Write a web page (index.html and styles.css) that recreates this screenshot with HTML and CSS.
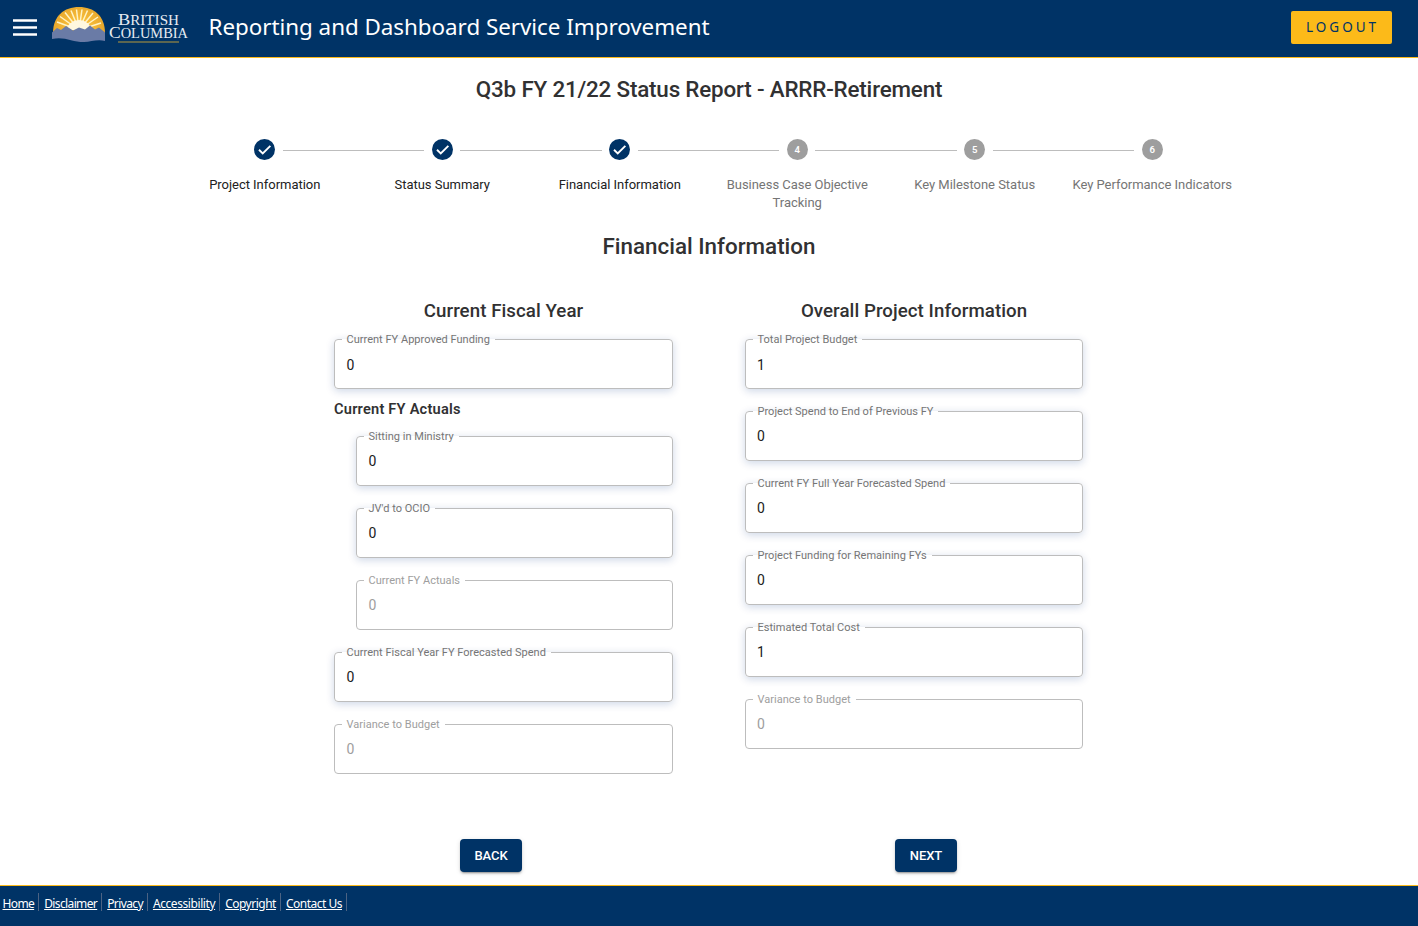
FILE: index.html
```html
<!DOCTYPE html>
<html lang="en">
<head>
<meta charset="utf-8">
<title>Reporting and Dashboard Service Improvement</title>
<link rel="stylesheet" href="styles.css">
</head>
<body>
<header class="header">
  <svg class="menu-icon" viewBox="0 0 24 17"><path d="M0 1.5h24M0 8.5h24M0 15.5h24"/></svg>
  <svg class="logo" width="138" height="38" viewBox="0 0 138 38">
    <defs><radialGradient id="sun" gradientUnits="userSpaceOnUse" cx="27" cy="24" r="27"><stop offset=".3" stop-color="#fcc23c"/><stop offset="1" stop-color="#e5a52b"/></radialGradient></defs>
    <path d="M1 27C1 10 12 1 27 1s26 9 26 26z" fill="url(#sun)"/>
    <path class="rays" d="M27 24L5 16M27 24L8 10.500M27 24L13 6.500M27 24L19 4.500M27 24L24.500 3.500M27 24L30 3.500M27 24L35.500 4.500M27 24L41 7M27 24L46 11M27 24L49 17"/>
    <path class="glow" d="M15 24a12 10 0 0 1 24 0z"/>
    <path class="hills" d="M0 26.500l5-4.500 4 2 5-4 7 4.500 6-3 6 2 5-4 5 4 4-2 6 5v8.500c-8-2-14 1-21 1-12 0-20-6-32-3z"/>
    <text class="logo-text" x="66" y="19" textLength="61" lengthAdjust="spacingAndGlyphs">B<tspan class="small-cap">RITISH</tspan></text>
    <text class="logo-text" x="57" y="32" textLength="79" lengthAdjust="spacingAndGlyphs">C<tspan class="small-cap">OLUMBIA</tspan></text>
    <path class="logo-line" d="M66 36h61"/>
  </svg>
  <h1 class="app-title">Reporting and Dashboard Service Improvement</h1>
  <button class="logout">LOGOUT</button>
</header>
<main class="main">
  <h2 class="report-title">Q3b FY 21/22 Status Report - ARRR-Retirement</h2>
  <ol class="stepper">
    <li class="step done"><svg class="dot" viewBox="0 0 24 24"><circle cx="12" cy="12" r="12"/><path class="check" d="M5.700 12.300l4.300 4.200 8.700-8.700"/></svg><span>Project Information</span></li>
    <li class="step done"><svg class="dot" viewBox="0 0 24 24"><circle cx="12" cy="12" r="12"/><path class="check" d="M5.700 12.300l4.300 4.200 8.700-8.700"/></svg><span>Status Summary</span></li>
    <li class="step done"><svg class="dot" viewBox="0 0 24 24"><circle cx="12" cy="12" r="12"/><path class="check" d="M5.700 12.300l4.300 4.200 8.700-8.700"/></svg><span>Financial Information</span></li>
    <li class="step"><b class="dot">4</b><span>Business Case Objective Tracking</span></li>
    <li class="step"><b class="dot">5</b><span>Key Milestone Status</span></li>
    <li class="step"><b class="dot">6</b><span>Key Performance Indicators</span></li>
  </ol>
  <h2 class="section-title">Financial Information</h2>
  <div class="columns">
    <section class="column left">
      <h3 class="column-title">Current Fiscal Year</h3>
      <div class="field first"><fieldset><legend>Current FY Approved Funding</legend></fieldset><span class="value">0</span></div>
      <h4 class="sub-title">Current FY Actuals</h4>
      <div class="field nested"><fieldset><legend>Sitting in Ministry</legend></fieldset><span class="value">0</span></div>
      <div class="field nested"><fieldset><legend>JV'd to OCIO</legend></fieldset><span class="value">0</span></div>
      <div class="field nested disabled"><fieldset><legend>Current FY Actuals</legend></fieldset><span class="value">0</span></div>
      <div class="field"><fieldset><legend>Current Fiscal Year FY Forecasted Spend</legend></fieldset><span class="value">0</span></div>
      <div class="field disabled"><fieldset><legend>Variance to Budget</legend></fieldset><span class="value">0</span></div>
    </section>
    <section class="column right">
      <h3 class="column-title">Overall Project Information</h3>
      <div class="field first"><fieldset><legend>Total Project Budget</legend></fieldset><span class="value">1</span></div>
      <div class="field"><fieldset><legend>Project Spend to End of Previous FY</legend></fieldset><span class="value">0</span></div>
      <div class="field"><fieldset><legend>Current FY Full Year Forecasted Spend</legend></fieldset><span class="value">0</span></div>
      <div class="field"><fieldset><legend>Project Funding for Remaining FYs</legend></fieldset><span class="value">0</span></div>
      <div class="field"><fieldset><legend>Estimated Total Cost</legend></fieldset><span class="value">1</span></div>
      <div class="field disabled"><fieldset><legend>Variance to Budget</legend></fieldset><span class="value">0</span></div>
    </section>
  </div>
  <div class="actions"><button class="nav-button">BACK</button><button class="nav-button">NEXT</button></div>
</main>
<footer class="footer">
  <a href="#">Home</a><a href="#">Disclaimer</a><a href="#">Privacy</a><a href="#">Accessibility</a><a href="#">Copyright</a><a href="#">Contact Us</a>
</footer>
</body>
</html>
```
FILE: styles.css
```css
* { box-sizing: border-box; }
body { margin: 0; height: 926px; display: flex; flex-direction: column; background: #fff; font-family: Roboto, sans-serif; color: #313132; overflow: hidden; }
h1, h2, h3, h4 { margin: 0; font-weight: 500; }
.header { height: 58px; flex: none; display: flex; align-items: flex-start; background: #003366; border-bottom: 1px solid #fcba19; padding: 0 26px 0 13px; }
.menu-icon { width: 24px; height: 17px; margin-top: 19px; stroke: #fff; stroke-width: 2.3; }
.logo { margin: 6px 0 0 15px; }
.rays { stroke: #fff3c4; stroke-width: 1.5; fill: none; }
.glow { fill: #fff8df; }
.hills { fill: #6a7ba6; }
.logo-text { font-family: "Liberation Serif", serif; font-size: 17px; fill: #e6ebf2; }
.small-cap { font-size: 14px; }
.logo-line { stroke: #5c6650; stroke-width: 1.8; }
.app-title { margin-left: 18.5px; font: 400 22.4px/30px "Noto Sans", sans-serif; letter-spacing: -.03px; color: #fff; padding-top: 12px; white-space: nowrap; }
.logout { margin: 11px 0 0 auto; width: 101px; height: 33px; border: 0; border-radius: 2px; background: #fcba19; color: #003366; font: 400 13.5px/33px "Noto Sans", sans-serif; letter-spacing: 3px; padding: 0 0 0 2px; }
.main { flex: none; height: 827px; }
.report-title { text-align: center; font-size: 22.4px; line-height: 28px; letter-spacing: -.18px; padding-top: 17px; }
.stepper { list-style: none; display: flex; margin: 36px 177px 0 176px; padding: 0; height: 82px; }
.step { flex: 1; position: relative; display: flex; flex-direction: column; align-items: center; text-align: center; font-size: 13px; line-height: 18px; letter-spacing: -.03px; color: #757575; padding: 0 7px; }
.step span { margin-top: 16px; }
.step + .step::before { content: ""; position: absolute; top: 11px; left: calc(-50% + 18px); right: calc(50% + 18px); height: 1px; background: #bdbdbd; }
.step.done { color: #212121; }
.dot { width: 21px; height: 21px; fill: #003366; flex: none; }
.check { fill: none; stroke: #fff; stroke-width: 2.1; }
b.dot { border-radius: 50%; background: #9e9e9e; color: #fff; font-size: 9.6px; line-height: 21px; font-weight: 600; }
.section-title { text-align: center; font-size: 22.4px; line-height: 28px; margin-top: 11px; }
.columns { display: grid; grid-template-columns: 339px 338px; column-gap: 72px; margin: 40px 0 0 334px; height: 500px; }
.column-title { text-align: center; font-size: 18.7px; line-height: 22px; letter-spacing: .06px; margin-bottom: 17px; }
.field { position: relative; height: 50px; margin-bottom: 22px; border-radius: 4px; box-shadow: 0 2px 8px rgba(0, 51, 130, .2); padding: 16px 12.5px; font-size: 14px; line-height: 18px; color: #212121; }
.first { padding-top: 17px; }
.right .field { padding-left: 12px; }
.nested { margin-left: 22px; }
.field fieldset { position: absolute; inset: -6px 0 0; margin: 0; padding: 0 7px; border: 1px solid #bdbdbd; border-radius: 4px; }
.field legend { padding: 0 5px 0 4.5px; font-size: 11px; line-height: 13px; letter-spacing: .02px; color: #757575; }
.disabled { box-shadow: none; color: #9e9e9e; }
.disabled legend { color: #9e9e9e; }
.sub-title { font-size: 14.6px; font-weight: 600; line-height: 18px; letter-spacing: .22px; margin: -11px 0 18px; }
.actions { display: flex; gap: 373px; margin: 39px 0 0 460px; }
.nav-button { width: 62px; height: 33px; padding: 0; border: 0; border-radius: 4px; background: #003366; color: #fff; font: 500 13px/33px Roboto, sans-serif; letter-spacing: -.05px; box-shadow: 0 3px 1px -2px rgba(0,0,0,.2), 0 2px 2px rgba(0,0,0,.14), 0 1px 5px rgba(0,0,0,.12); }
.footer { height: 41px; flex: none; background: #003366; border-top: 1px solid #fcba19; display: flex; padding: 7px 0 0 2.5px; }
.footer a { height: 18px; color: #fff; font: 400 12px/22px "Noto Sans", sans-serif; letter-spacing: -.5px; border-right: 1px solid #4c6383; padding-right: 4px; margin-right: 5px; }
.footer a:nth-child(1), .footer a:nth-child(2), .footer a:nth-child(3) { letter-spacing: -.62px; }
.footer a:nth-child(4) { letter-spacing: -.42px; }
```
